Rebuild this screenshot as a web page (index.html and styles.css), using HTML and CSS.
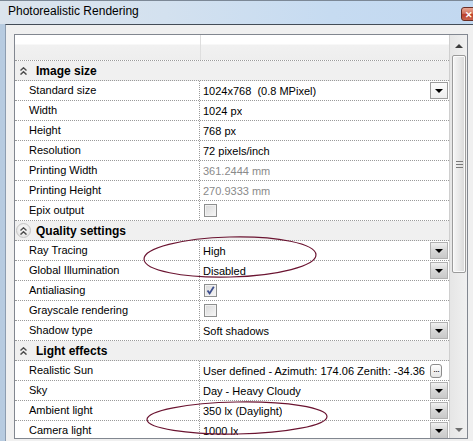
FILE: index.html
```html
<!DOCTYPE html>
<html lang="en">
<head>
    <meta charset="UTF-8">
    <title>Photorealistic Rendering</title>
    <link rel="stylesheet" href="styles.css">
</head>
<body>
<div class="window">
    <div class="titlebar">
        <span class="title">Photorealistic Rendering</span>
        <span class="close-btn">&#x2715;</span>
    </div>

    <div class="client">
        <div class="prop-box">
            <div class="prop-grid">
                <div class="grid-head">
                    <div class="head-name"></div>
                    <div class="head-value"></div>
                </div>

                <div class="rows">
                    <!-- Image size -->
                    <div class="category">
                        <span class="cat-icon"><svg viewBox="0 0 7 8" width="7" height="8"><path d="M0.5 3.6 L3.5 0.8 L6.5 3.6 M0.5 7.6 L3.5 4.8 L6.5 7.6"/></svg></span>
                        <span class="cat-label">Image size</span>
                    </div>
                    <div class="row">
                        <div class="name">Standard size</div>
                        <div class="value"><span class="text">1024x768&nbsp; (0.8 MPixel)</span><span class="drop light"></span></div>
                    </div>
                    <div class="row">
                        <div class="name">Width</div>
                        <div class="value"><span class="text">1024 px</span></div>
                    </div>
                    <div class="row">
                        <div class="name">Height</div>
                        <div class="value"><span class="text">768 px</span></div>
                    </div>
                    <div class="row">
                        <div class="name">Resolution</div>
                        <div class="value"><span class="text">72 pixels/inch</span></div>
                    </div>
                    <div class="row">
                        <div class="name">Printing Width</div>
                        <div class="value"><span class="text readonly">361.2444 mm</span></div>
                    </div>
                    <div class="row">
                        <div class="name">Printing Height</div>
                        <div class="value"><span class="text readonly">270.9333 mm</span></div>
                    </div>
                    <div class="row">
                        <div class="name">Epix output</div>
                        <div class="value"><span class="check"></span></div>
                    </div>

                    <!-- Quality settings -->
                    <div class="category">
                        <span class="cat-icon hot"><svg viewBox="0 0 7 8" width="7" height="8"><path d="M0.5 3.6 L3.5 0.8 L6.5 3.6 M0.5 7.6 L3.5 4.8 L6.5 7.6"/></svg></span>
                        <span class="cat-label">Quality settings</span>
                    </div>
                    <div class="row">
                        <div class="name">Ray Tracing</div>
                        <div class="value"><span class="text">High</span><span class="drop"></span></div>
                    </div>
                    <div class="row">
                        <div class="name">Global Illumination</div>
                        <div class="value"><span class="text">Disabled</span><span class="drop"></span></div>
                    </div>
                    <div class="row">
                        <div class="name">Antialiasing</div>
                        <div class="value"><span class="check checked"><svg viewBox="0 0 11 11" width="11" height="11"><path d="M2.5 5.5 L4.6 8.4 L8.8 1.8"/></svg></span></div>
                    </div>
                    <div class="row">
                        <div class="name">Grayscale rendering</div>
                        <div class="value"><span class="check"></span></div>
                    </div>
                    <div class="row">
                        <div class="name">Shadow type</div>
                        <div class="value"><span class="text">Soft shadows</span><span class="drop"></span></div>
                    </div>

                    <!-- Light effects -->
                    <div class="category">
                        <span class="cat-icon"><svg viewBox="0 0 7 8" width="7" height="8"><path d="M0.5 3.6 L3.5 0.8 L6.5 3.6 M0.5 7.6 L3.5 4.8 L6.5 7.6"/></svg></span>
                        <span class="cat-label">Light effects</span>
                    </div>
                    <div class="row">
                        <div class="name">Realistic Sun</div>
                        <div class="value"><span class="text">User defined - Azimuth: 174.06 Zenith: -34.36</span><span class="more">&middot;&middot;&middot;</span></div>
                    </div>
                    <div class="row">
                        <div class="name">Sky</div>
                        <div class="value"><span class="text">Day - Heavy Cloudy</span><span class="drop"></span></div>
                    </div>
                    <div class="row">
                        <div class="name">Ambient light</div>
                        <div class="value"><span class="text">350 lx (Daylight)</span><span class="drop"></span></div>
                    </div>
                    <div class="row">
                        <div class="name">Camera light</div>
                        <div class="value"><span class="text">1000 lx</span><span class="drop"></span></div>
                    </div>
                </div>
            </div>

            <div class="vscroll">
                <div class="scroll-btn"><span class="arrow up"></span></div>
                <div class="thumb"><span class="grip"></span></div>
                <div class="scroll-btn bottom"><span class="arrow down"></span></div>
            </div>
        </div>
    </div>

    <!-- hand-drawn highlight marks -->
    <svg class="marks" width="473" height="441" viewBox="0 0 473 441">
        <ellipse cx="230" cy="257" rx="86" ry="20" transform="rotate(-1.5 230 257)"/>
        <ellipse cx="237" cy="418" rx="90" ry="16" transform="rotate(-1 237 418)"/>
    </svg>
</div>
</body>
</html>
```

FILE: styles.css
```css
body {
    margin: 0;
    font-family: "Liberation Sans", Arial, sans-serif;
    font-size: 11px;
    color: #000;
}

.window {
    position: relative;
    width: 473px;
    height: 441px;
    overflow: hidden;
    background: linear-gradient(to right, #b7cbe0, #c9dbee);
}

/* title bar */
.titlebar {
    position: relative;
    height: 23px;
    border-top: 1px solid #7c8896;
    background: linear-gradient(to right, #dce4ed 0%, #d3e1ef 35%, #c6dbf1 70%, #c2d8f0 100%);
    display: flex;
    align-items: center;
}

.title {
    padding-left: 8px;
    font-size: 12px;
    margin-top: -3px;
}

.close-btn {
    position: absolute;
    left: 461px;
    top: 6px;
    width: 24px;
    height: 14px;
    border: 1px solid #6b2d24;
    border-radius: 3px;
    background: linear-gradient(#eaa895, #d0705c 45%, #bb3f2b 55%, #c9634e);
    color: #fff;
    font-size: 9px;
    font-weight: bold;
    line-height: 14px;
    padding-left: 3px;
    box-sizing: border-box;
}

/* dialog body */
.client {
    margin-left: 5px;
    border-left: 1px solid #8d9db0;
    border-top: 1px solid #434c57;
    background: #f0f0f0;
    padding: 9px 0 0 8px;
    height: 480px;
}

.prop-box {
    display: flex;
    width: 452px;
    height: 403px;
    border: 1px solid #828790;
    background: #fff;
}

.prop-grid {
    width: 434px;
    display: flex;
    flex-direction: column;
}

.grid-head {
    height: 25px;
    flex-shrink: 0;
    display: flex;
    border-bottom: 1px dotted #9a9a9a;
    background: linear-gradient(#fff 0, #fff 9px, #f1f1f1 10px, #eeeeee 100%);
}

.head-name {
    width: 185px;
    border-right: 1px solid #dedede;
}

.rows {
    height: 377px;
    overflow: hidden;
}

.category,
.row {
    height: 19px;
    border-bottom: 1px dotted #9a9a9a;
    display: flex;
    align-items: center;
}

.category {
    background: #f0f0f0;
}

.cat-icon {
    width: 15px;
    height: 15px;
    margin-left: 1px;
    display: flex;
    align-items: center;
    justify-content: center;
    border-radius: 50%;
    box-sizing: border-box;
}

.cat-icon svg path {
    fill: none;
    stroke: #4c4c4c;
    stroke-width: 1.4;
}

.cat-icon.hot {
    background: radial-gradient(circle at 50% 40%, #fdfdfd, #dcdcdc);
    border: 1px solid #c4c4c4;
}

.cat-label {
    margin-left: 5px;
    font-size: 12px;
    font-weight: bold;
}

.name {
    width: 185px;
    height: 19px;
    line-height: 19px;
    padding-left: 14px;
    box-sizing: border-box;
    border-right: 1px dotted #9a9a9a;
    white-space: nowrap;
}

.value {
    flex: 1;
    height: 19px;
    padding-left: 3px;
    display: flex;
    align-items: center;
    min-width: 0;
}

.text {
    white-space: nowrap;
    overflow: hidden;
}

.readonly {
    color: #8a8a8a;
}

/* combo button */
.drop {
    margin-left: auto;
    margin-right: 1px;
    width: 18px;
    height: 17px;
    box-sizing: border-box;
    border: 1px solid #b0b0b0;
    background: linear-gradient(#f0f0f0, #d6d6d6 50%, #c9c9c9);
    display: flex;
    align-items: center;
    justify-content: center;
}

.drop::after {
    content: '';
    border-left: 4px solid transparent;
    border-right: 4px solid transparent;
    border-top: 4px solid #000;
}

.drop.light {
    border-color: #9c9c9c;
    background: linear-gradient(#fcfcfc, #eeeeee);
}

.more {
    margin-left: auto;
    margin-right: 7px;
    width: 12px;
    height: 14px;
    box-sizing: border-box;
    border: 1px solid #8c8c8c;
    border-radius: 3px;
    background: linear-gradient(#ffffff, #e4e4e4);
    font-size: 9px;
    line-height: 12px;
    text-align: center;
    letter-spacing: -1px;
}

/* checkbox */
.check {
    margin-left: 1px;
    width: 13px;
    height: 13px;
    box-sizing: border-box;
    border: 1px solid #8e8f8f;
    background: linear-gradient(135deg, #d9d9d9, #f7f7f7);
    box-shadow: inset 0 0 0 1px #f2f2f2;
    display: flex;
    align-items: center;
    justify-content: center;
}

.check svg path {
    fill: none;
    stroke: #3e4f8e;
    stroke-width: 1.8;
}

/* scrollbar */
.vscroll {
    width: 17px;
    border-left: 1px solid #cfcfcf;
    background: linear-gradient(to right, #e6e6e6, #f0f0f0);
    display: flex;
    flex-direction: column;
}

.scroll-btn {
    height: 17px;
    display: flex;
    align-items: center;
    justify-content: center;
}

.scroll-btn.bottom {
    margin-top: auto;
    height: 18px;
    align-items: flex-start;
    padding-top: 8px;
    box-sizing: border-box;
}

.arrow {
    border-left: 4px solid transparent;
    border-right: 4px solid transparent;
}

.arrow.up {
    border-bottom: 4px solid #3c3c3c;
    margin-top: 4px;
}

.arrow.down {
    border-top: 4px solid #6e6e6e;
}

.thumb {
    margin: 3px 1px 0 2px;
    height: 218px;
    box-sizing: border-box;
    border: 1px solid #9b9b9b;
    border-radius: 2px;
    background: linear-gradient(to right, #f6f6f6, #e8e8e8 50%, #d8d8d8);
    box-shadow: inset 0 0 0 1px #fbfbfb;
    display: flex;
    align-items: center;
    justify-content: center;
}

.grip {
    width: 7px;
    height: 5px;
    border-top: 1px solid #7a7a7a;
    border-bottom: 1px solid #7a7a7a;
    background: linear-gradient(#7a7a7a, #7a7a7a) center / 100% 1px no-repeat;
}

/* highlight marks */
.marks {
    position: absolute;
    top: 0;
    left: 0;
    pointer-events: none;
}

.marks ellipse {
    fill: none;
    stroke: #6b1431;
    stroke-width: 1.2;
}
```
